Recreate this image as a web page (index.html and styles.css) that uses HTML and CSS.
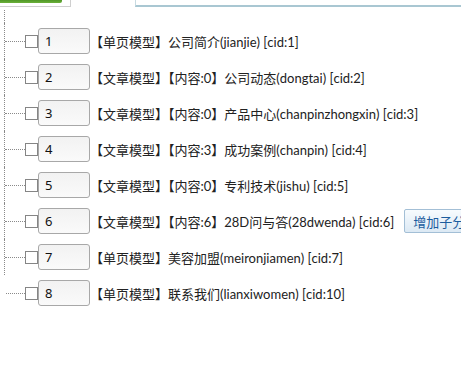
FILE: index.html
```html
<!DOCTYPE html>
<html lang="zh-CN">
<head>
    <meta charset="UTF-8">
    <title>栏目管理</title>
    <link rel="stylesheet" href="styles.css">
</head>
<body>
    <div class="tabs">
        <div class="tab tab-on"><span class="tab-bar"></span></div>
        <div class="tab-gap"></div>
        <div class="tab tab-panel"></div>
    </div>

    <div class="tree">
        <div class="stem"></div>
        <div class="node">
            <span class="branch"></span>
            <input class="check" type="checkbox">
            <input class="order" type="text" value="1">
            <span class="label">【单页模型】公司简介(jianjie) [cid:1]</span>
        </div>
        <div class="node">
            <span class="branch"></span>
            <input class="check" type="checkbox">
            <input class="order" type="text" value="2">
            <span class="label">【文章模型】【内容:0】公司动态(dongtai) [cid:2]</span>
        </div>
        <div class="node">
            <span class="branch"></span>
            <input class="check" type="checkbox">
            <input class="order" type="text" value="3">
            <span class="label">【文章模型】【内容:0】产品中心(chanpinzhongxin) [cid:3]</span>
        </div>
        <div class="node">
            <span class="branch"></span>
            <input class="check" type="checkbox">
            <input class="order" type="text" value="4">
            <span class="label">【文章模型】【内容:3】成功案例(chanpin) [cid:4]</span>
        </div>
        <div class="node">
            <span class="branch"></span>
            <input class="check" type="checkbox">
            <input class="order" type="text" value="5">
            <span class="label">【文章模型】【内容:0】专利技术(jishu) [cid:5]</span>
        </div>
        <div class="node">
            <span class="branch"></span>
            <input class="check" type="checkbox">
            <input class="order" type="text" value="6">
            <span class="label">【文章模型】【内容:6】28D问与答(28dwenda) [cid:6]</span>
            <button class="btn">增加子分类</button>
        </div>
        <div class="node">
            <span class="branch"></span>
            <input class="check" type="checkbox">
            <input class="order" type="text" value="7">
            <span class="label">【单页模型】美容加盟(meironjiamen) [cid:7]</span>
        </div>
        <div class="node">
            <span class="branch"></span>
            <input class="check" type="checkbox">
            <input class="order" type="text" value="8">
            <span class="label">【单页模型】联系我们(lianxiwomen) [cid:10]</span>
        </div>
    </div>
</body>
</html>
```

FILE: styles.css
```css
body {
    margin: 0;
    padding: 0;
    background-color: #ffffff;
    color: #222222;
    font-family: Lato, "Noto Sans CJK SC", sans-serif;
    font-size: 13px;
    overflow: hidden;
}

.tabs {
    display: flex;
    height: 7px;
}

.tab-on {
    width: 70px;
    border-right: 1px solid #cfcfcf;
    border-bottom: 1px solid #cfcfcf;
}

.tab-bar {
    display: block;
    width: 62px;
    height: 3px;
    background: linear-gradient(#4f9626, #6bb13a);
    border-bottom-right-radius: 2px;
}

.tab-gap {
    width: 64px;
}

.tab-panel {
    flex: 1;
    border-left: 1px solid #c8dbe2;
    border-bottom: 2px solid #a9c7d2;
}

.tree {
    margin: 3px 0 0 4px;
}

.stem {
    height: 13px;
    border-left: 1px dotted #8a8a8a;
}

.node {
    display: flex;
    align-items: center;
    height: 36px;
    border-left: 1px dotted #8a8a8a;
    white-space: nowrap;
    overflow: hidden;
}

.node > * {
    flex-shrink: 0;
}

.node:last-child {
    border-left-color: transparent;
}

.branch {
    width: 20px;
    border-top: 1px dotted #8a8a8a;
}

.node:last-child .branch {
    align-self: flex-start;
    height: 18px;
    margin-left: -1px;
    border-top: none;
    border-left: 1px dotted #8a8a8a;
    border-bottom: 1px dotted #8a8a8a;
}

.check {
    appearance: none;
    width: 13px;
    height: 13px;
    margin: 0;
    border: 1px solid #858585;
    background-color: #ffffff;
}

.order {
    width: 52px;
    height: 26px;
    box-sizing: border-box;
    margin: 0;
    padding: 0 0 0 6px;
    border: 1px solid #a8a8a8;
    border-radius: 3px;
    background: linear-gradient(#f2f2f2, #fafafa);
    color: #111111;
    font-family: "Noto Sans", sans-serif;
    font-size: 13px;
}

.label {
    margin-left: 0;
}

.btn {
    margin-left: 10px;
    height: 24px;
    padding: 0 8px;
    border: 1px solid #a3bfd6;
    border-radius: 2px;
    background: linear-gradient(#f7fbfe, #dce9f4);
    color: #1b5c9e;
    font-family: "Noto Sans CJK SC", sans-serif;
    font-size: 13px;
}
```
